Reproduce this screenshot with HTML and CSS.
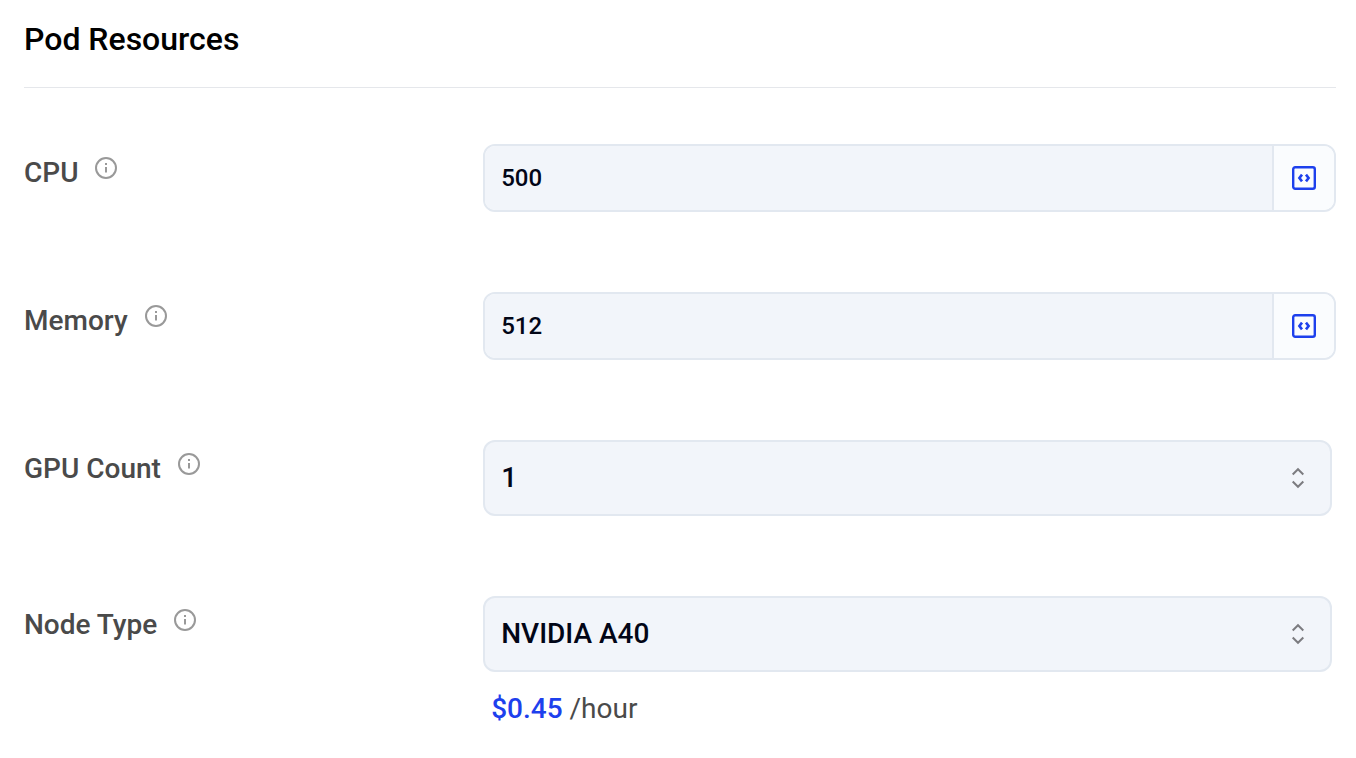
FILE: index.html
```html
<!DOCTYPE html>
<html lang="en">
<head>
<meta charset="utf-8">
<title>Pod Resources</title>
<link rel="stylesheet" href="styles.css">
</head>
<body>
<svg class="sprite" aria-hidden="true">
  <symbol id="info" viewBox="0 0 24 24"><circle cx="12" cy="12" r="10"/><path d="M12 11v5.500M12 7v2"/></symbol>
  <symbol id="code" viewBox="0 0 24 24"><rect x="1.200" y="1.200" width="21.600" height="21.600" rx="2" stroke-width="2.400"/><path stroke-width="2.600" d="M10 8.600L7.400 12l2.600 3.400M14 8.600l2.600 3.400-2.600 3.400"/></symbol>
  <symbol id="updown" viewBox="0 0 16 24"><path d="M2.700 8.500L8 3.200l5.300 5.300M2.700 15.500L8 20.800l5.300-5.300"/></symbol>
</svg>
<main class="panel">
  <h1 class="title">Pod Resources</h1>
  <form class="fields">
    <div class="row">
      <div class="label"><label for="cpu">CPU</label><svg class="info"><use href="#info"/></svg></div>
      <div class="input-group">
        <input class="input" id="cpu" type="text" value="500">
        <button class="code" type="button" aria-label="Use expression for CPU"><svg><use href="#code"/></svg></button>
      </div>
    </div>
    <div class="row">
      <div class="label"><label for="memory">Memory</label><svg class="info"><use href="#info"/></svg></div>
      <div class="input-group">
        <input class="input" id="memory" type="text" value="512">
        <button class="code" type="button" aria-label="Use expression for memory"><svg><use href="#code"/></svg></button>
      </div>
    </div>
    <div class="row">
      <div class="label"><label for="gpu">GPU Count</label><svg class="info"><use href="#info"/></svg></div>
      <div class="select-wrap">
        <select class="select" id="gpu"><option>1</option></select>
        <svg class="chevrons"><use href="#updown"/></svg>
      </div>
    </div>
    <div class="row">
      <div class="label"><label for="node">Node Type</label><svg class="info"><use href="#info"/></svg></div>
      <div>
        <div class="select-wrap">
          <select class="select" id="node"><option>NVIDIA A40</option></select>
          <svg class="chevrons"><use href="#updown"/></svg>
        </div>
        <p class="price"><strong class="amount">$0.45</strong> /hour</p>
      </div>
    </div>
  </form>
</main>
</body>
</html>
```
FILE: styles.css
```css
* { box-sizing: border-box; }
body { margin: 0; background: #fff; font-family: Roboto, sans-serif; }
.sprite { position: absolute; width: 0; height: 0; }
svg { fill: none; stroke: currentColor; stroke-width: 2; }
.panel { padding: 0 20px 0 24px; }
.title { margin: 0; padding: 19px 0 28px; border-bottom: 1px solid #e5e7eb; font-size: 32px; line-height: 40px; font-weight: 500; color: #000; }
.fields { display: grid; gap: 80px; padding-top: 56px; }
.row { display: grid; grid-template-columns: 35fr 65fr; align-items: start; }
.label { display: flex; gap: 16px; padding-top: 12px; font-size: 28px; line-height: 34px; font-weight: 500; color: #4a4a4a; }
.info { width: 24px; height: 24px; color: #999; }
.input-group { display: flex; height: 68px; border: 2px solid #e2e8f0; border-radius: 12px; overflow: hidden; }
.input { flex: 1; min-width: 0; padding: 0 16px; border: 0; background: #f2f5fa; font: 500 24px Roboto, sans-serif; color: #020617; }
.code { display: grid; place-items: center; width: 62px; padding: 0; border: 0; border-left: 2px solid #e2e8f0; background: #fafcfe; color: #1d40ed; }
.code svg { width: 24px; height: 24px; }
.select-wrap { position: relative; margin-right: 4px; }
.select { display: block; width: 100%; height: 76px; padding: 0 64px 2px 16px; border: 2px solid #e2e8f0; border-radius: 12px; appearance: none; background: #f2f5fa; font: 500 28px Roboto, sans-serif; color: #020617; }
.chevrons { position: absolute; top: 26px; right: 26px; width: 16px; height: 24px; color: #7c7c80; pointer-events: none; }
.price { margin: 0; padding: 20px 8px 0; font-size: 28px; line-height: 34px; color: #4a4a4a; }
.amount { font-weight: 500; color: #1d40ed; }
```
